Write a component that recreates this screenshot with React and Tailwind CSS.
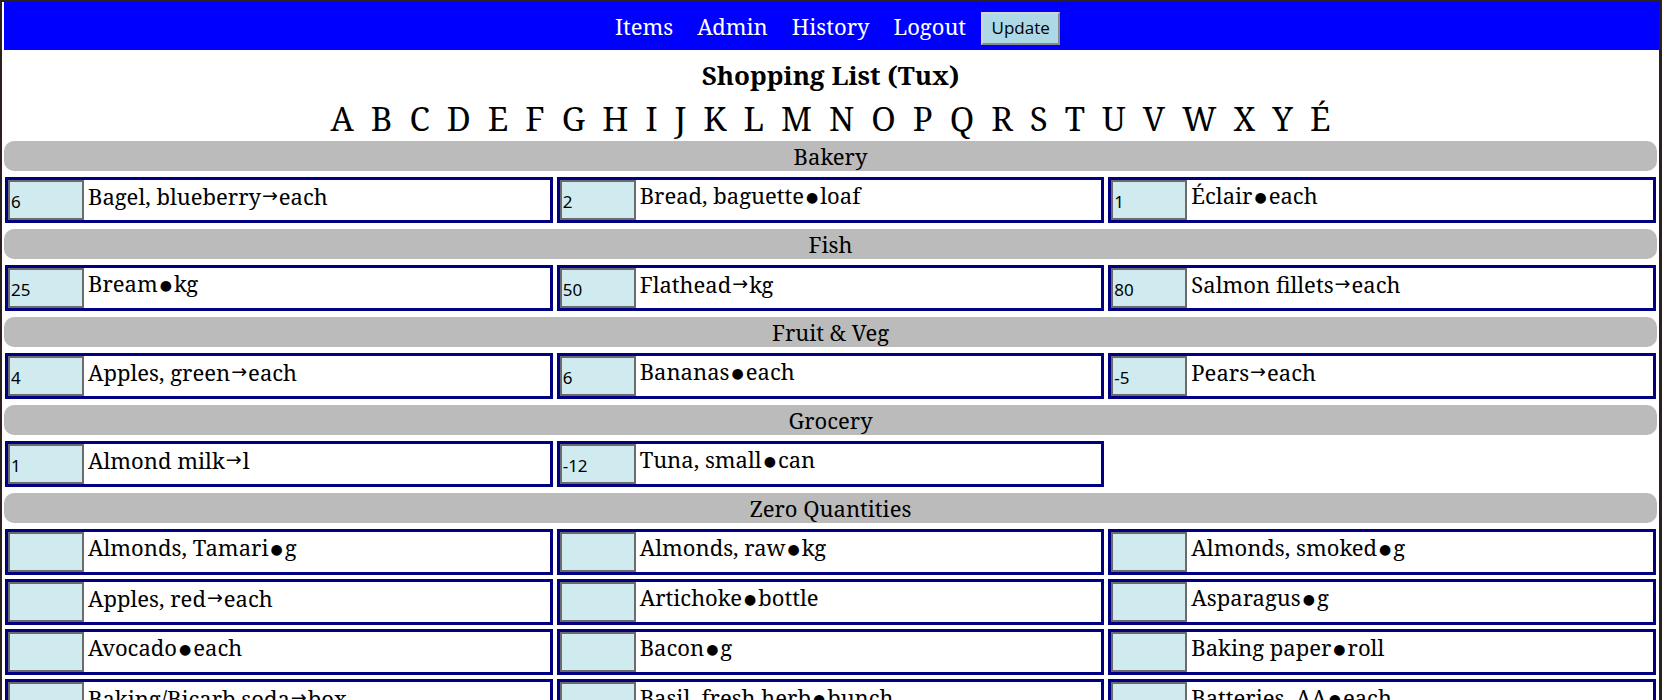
import React from "react";

const serif = { fontFamily: "'Noto Serif', 'DejaVu Serif', serif" };

const letters = ["A","B","C","D","E","F","G","H","I","J","K","L","M","N","O","P","Q","R","S","T","U","V","W","X","Y","É"];

// sep: "a" = arrow, "d" = dot
const sections = [
  {
    name: "Bakery",
    items: [
      ["6", "Bagel, blueberry", "a", "each"],
      ["2", "Bread, baguette", "d", "loaf"],
      ["1", "Éclair", "d", "each"],
    ],
  },
  {
    name: "Fish",
    items: [
      ["25", "Bream", "d", "kg"],
      ["50", "Flathead", "a", "kg"],
      ["80", "Salmon fillets", "a", "each"],
    ],
  },
  {
    name: "Fruit & Veg",
    items: [
      ["4", "Apples, green", "a", "each"],
      ["6", "Bananas", "d", "each"],
      ["-5", "Pears", "a", "each"],
    ],
  },
  {
    name: "Grocery",
    items: [
      ["1", "Almond milk", "a", "l"],
      ["-12", "Tuna, small", "d", "can"],
    ],
  },
  {
    name: "Zero Quantities",
    items: [
      ["", "Almonds, Tamari", "d", "g"],
      ["", "Almonds, raw", "d", "kg"],
      ["", "Almonds, smoked", "d", "g"],
      ["", "Apples, red", "a", "each"],
      ["", "Artichoke", "d", "bottle"],
      ["", "Asparagus", "d", "g"],
      ["", "Avocado", "d", "each"],
      ["", "Bacon", "d", "g"],
      ["", "Baking paper", "d", "roll"],
      ["", "Baking/Bicarb soda", "a", "box"],
      ["", "Basil, fresh herb", "d", "bunch"],
      ["", "Batteries, AA", "d", "each"],
      ["", "Bay leaves", "d", "g"],
      ["", "Beans, green", "a", "kg"],
      ["", "Beef mince", "d", "kg"],
    ],
  },
];

const Item = ({ qty, name, sep, unit }) => {
  return (
    <div className="h-[46px] border-[3px] border-[#000080] bg-white flex items-start min-w-0">
      <input
        readOnly
        value={qty}
        className="w-[76px] h-[40px] shrink-0 border-2 border-[#6b6b6b] bg-[#cfebf0] pl-[1px] pt-[2px] text-[17px] text-black outline-none"
        style={{ fontFamily: "'Noto Sans', sans-serif" }}
      />
      <span className="ml-[4px] text-[22px] leading-[30px] text-black whitespace-nowrap" style={serif}>
        {name}
        {sep === "a" ? (
          <span className="text-[19px] align-[3px] mx-[1px]" style={{ fontFamily: "'DejaVu Sans', sans-serif" }}>→</span>
        ) : (
          <span className="text-[14px] align-[2px] mx-[2px]" style={{ fontFamily: "'DejaVu Sans', sans-serif" }}>●</span>
        )}
        {unit}
      </span>
    </div>
  );
};

export default function App() {
  return (
    <div className="h-[700px] overflow-hidden bg-[#2a2020] pt-[2px] pl-[2px] pr-[3px]">
      <div className="h-full bg-white" style={serif}>
        <nav className="ml-[2px] h-[48px] bg-[#0000ff] flex items-center justify-center pl-[12px]">
          <a className="text-white text-[22px]">Items</a>
          <a className="text-white text-[22px] ml-[24px]">Admin</a>
          <a className="text-white text-[22px] ml-[24px]">History</a>
          <a className="text-white text-[22px] ml-[24px]">Logout</a>
          <button
            className="ml-[15px] mt-[4px] w-[79px] h-[33px] bg-[#add8e6] border-2 border-t-[#d4d4d4] border-l-[#d4d4d4] border-r-[#8a8a8a] border-b-[#8a8a8a] text-[17px] text-black"
            style={{ fontFamily: "'Open Sans', sans-serif" }}
          >
            Update
          </button>
        </nav>

        <h1 className="h-[50px] flex items-center justify-center text-[26px] font-bold text-black">
          Shopping List (Tux)
        </h1>

        <div className="h-[38px] flex items-center justify-center gap-[17px] text-[33px] text-black">
          {letters.map((l) => (
            <a key={l}>{l}</a>
          ))}
        </div>

        <div className="mt-[3px]">
          {sections.map((s) => (
            <div key={s.name} className="mb-[6px]">
              <div className="mx-[2px] h-[30px] rounded-[10px] bg-[#bbbbbb] flex items-center justify-center text-[22px] text-black">
                {s.name}
              </div>
              <div className="mt-[6px] px-[3px] grid grid-cols-3 gap-[4px]">
                {s.items.map((it, i) => (
                  <Item key={i} qty={it[0]} name={it[1]} sep={it[2]} unit={it[3]} />
                ))}
              </div>
            </div>
          ))}
        </div>
      </div>
    </div>
  );
}
